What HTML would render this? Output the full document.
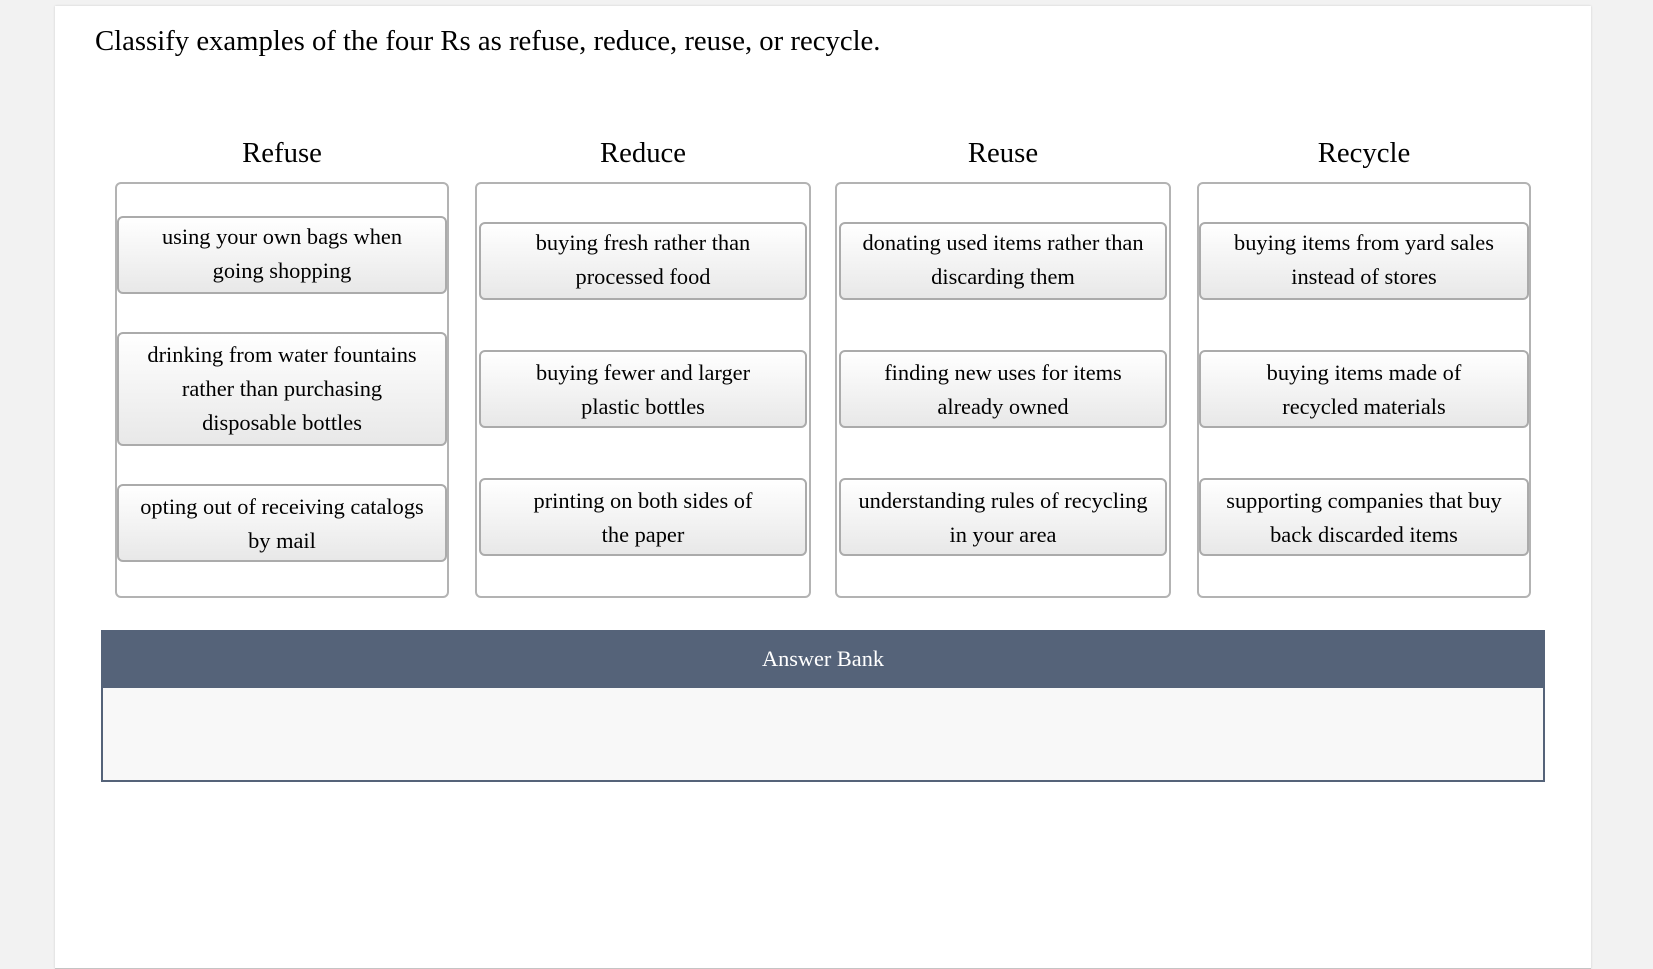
<!DOCTYPE html>
<html><head><meta charset="utf-8"><style>
html,body{margin:0;padding:0;width:1653px;height:969px;overflow:hidden;background:#f2f2f2;font-family:"Liberation Serif",serif;color:#000}
.a{position:absolute}
#page{left:55px;top:6px;width:1536px;height:962px;background:#fff;box-shadow:0 0 2px #ccc;border-bottom:1px solid #c4c4c4}
#t{left:95px;top:23px;font-size:28.73px;line-height:36px;white-space:nowrap}
.h{top:135px;height:36px;line-height:36px;font-size:28.73px;text-align:center}
.c{top:182px;height:416px;box-sizing:border-box;border:2px solid #b3b3b3;border-radius:6px;background:#fff}
.k{box-sizing:border-box;border:2px solid #ababab;border-radius:6px;background:linear-gradient(#fff,#e8e8e8);font-size:22.4px;line-height:34px;text-align:center;white-space:nowrap;padding-top:2px}
.r2{padding-top:4px}
#b{left:101px;top:630px;width:1444px;height:152px;box-sizing:border-box;border:2px solid #556379;background:#f8f8f8}
#bh{left:101px;top:630px;width:1444px;height:58px;background:#556379;color:#fff;font-size:22.3px;line-height:58px;text-align:center}
</style></head><body>
<div class="a" id="page"></div>
<div class="a" id="t">Classify examples of the four Rs as refuse, reduce, reuse, or recycle.</div>
<div class="a h" style="left:115px;width:334px">Refuse</div>
<div class="a h" style="left:475px;width:336px">Reduce</div>
<div class="a h" style="left:835px;width:336px">Reuse</div>
<div class="a h" style="left:1197px;width:334px">Recycle</div>
<div class="a c" style="left:115px;width:334px"></div>
<div class="a c" style="left:475px;width:336px"></div>
<div class="a c" style="left:835px;width:336px"></div>
<div class="a c" style="left:1197px;width:334px"></div>
<div class="a k" style="left:117px;top:216px;width:330px;height:78px">using your own bags when<br>going shopping</div>
<div class="a k" style="left:117px;top:332px;width:330px;height:114px;padding-top:4px">drinking from water fountains<br>rather than purchasing<br>disposable bottles</div>
<div class="a k" style="left:117px;top:484px;width:330px;height:78px;padding-top:4px">opting out of receiving catalogs<br>by mail</div>
<div class="a k" style="left:479px;top:222px;width:328px;height:78px">buying fresh rather than<br>processed food</div>
<div class="a k r2" style="left:479px;top:350px;width:328px;height:78px">buying fewer and larger<br>plastic bottles</div>
<div class="a k r2" style="left:479px;top:478px;width:328px;height:78px">printing on both sides of<br>the paper</div>
<div class="a k" style="left:839px;top:222px;width:328px;height:78px">donating used items rather than<br>discarding them</div>
<div class="a k r2" style="left:839px;top:350px;width:328px;height:78px">finding new uses for items<br>already owned</div>
<div class="a k r2" style="left:839px;top:478px;width:328px;height:78px">understanding rules of recycling<br>in your area</div>
<div class="a k" style="left:1199px;top:222px;width:330px;height:78px">buying items from yard sales<br>instead of stores</div>
<div class="a k r2" style="left:1199px;top:350px;width:330px;height:78px">buying items made of<br>recycled materials</div>
<div class="a k r2" style="left:1199px;top:478px;width:330px;height:78px">supporting companies that buy<br>back discarded items</div>
<div class="a" id="b"></div>
<div class="a" id="bh">Answer Bank</div>
</body></html>
